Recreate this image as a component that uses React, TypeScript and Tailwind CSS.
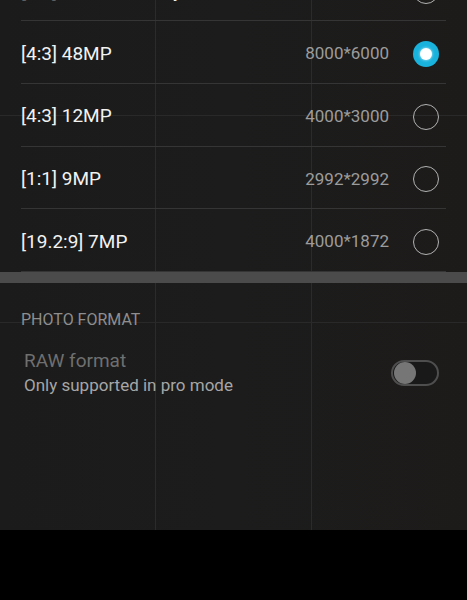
import React from "react";

const rows = [
  { label: "[4:3] AI Ultra Clarity", res: "", selected: false },
  { label: "[4:3] 48MP", res: "8000*6000", selected: true },
  { label: "[4:3] 12MP", res: "4000*3000", selected: false },
  { label: "[1:1] 9MP", res: "2992*2992", selected: false },
  { label: "[19.2:9] 7MP", res: "4000*1872", selected: false },
];

function Radio({ selected }: { selected: boolean }) {
  if (selected) {
    return (
      <div className="w-[26px] h-[26px] rounded-full bg-[#19b2dd] flex items-center justify-center">
        <div className="w-[12px] h-[12px] rounded-full bg-white shadow-[0_0_3px_rgba(255,255,255,0.8)]" />
      </div>
    );
  }
  return <div className="w-[26px] h-[26px] rounded-full border-[1.5px] border-[#b2b2b2]" />;
}

export default function App() {
  return (
    <div
      className="relative w-[467px] h-[600px] overflow-hidden bg-black"
      style={{ fontFamily: "Roboto, 'Noto Sans', sans-serif" }}
    >
      <div className="relative h-[530px] overflow-hidden bg-gradient-to-r from-[#1b1b1b] via-[#1c1c1c] to-[#1d1b1a]">
        {/* camera grid, behind the settings */}
        <div className="absolute top-0 bottom-0 left-[155px] w-px bg-[#2b2b2b]" />
        <div className="absolute top-0 bottom-0 left-[311px] w-px bg-[#2b2b2b]" />
        <div className="absolute left-0 right-0 top-[115px] h-px bg-[#292929]" />
        <div className="absolute left-0 right-0 top-[322px] h-px bg-[#292929]" />

        <div className="relative">
          <div className="flex flex-col mt-[-41.75px]">
            {rows.map((r, i) => (
              <div
                key={i}
                className="mx-[21px] h-[62.75px] pt-[4px] flex items-center border-b border-[#353535]"
              >
                <span className="text-[19px] text-[#f2f2f2] flex-1 whitespace-nowrap">{r.label}</span>
                {r.res && <span className="text-[17px] text-[#9c9c9c] mr-[24px]">{r.res}</span>}
                <div className="mr-[7px]">
                  <Radio selected={r.selected} />
                </div>
              </div>
            ))}
          </div>
          <div className="h-[11px] bg-[#4b4b4b]" />
          <div className="px-[21px] pt-[27px]">
            <div className="text-[16px] leading-[20px] text-[#8e8e8e]">PHOTO FORMAT</div>
            <div className="flex items-center mt-[20px] pl-[3px] pr-[7px]">
              <div className="flex-1">
                <div className="text-[19px] leading-[22px] text-[#6f6f6f]">RAW format</div>
                <div className="text-[17px] leading-[22px] text-[#a6a6a6] mt-[2px]">Only supported in pro mode</div>
              </div>
              <div className="w-[48px] h-[26px] rounded-full border-2 border-[#4e4e4e] bg-[#191919] flex items-center pl-[1px]">
                <div className="w-[22px] h-[22px] rounded-full bg-[#767676]" />
              </div>
            </div>
          </div>
        </div>
      </div>
    </div>
  );
}
